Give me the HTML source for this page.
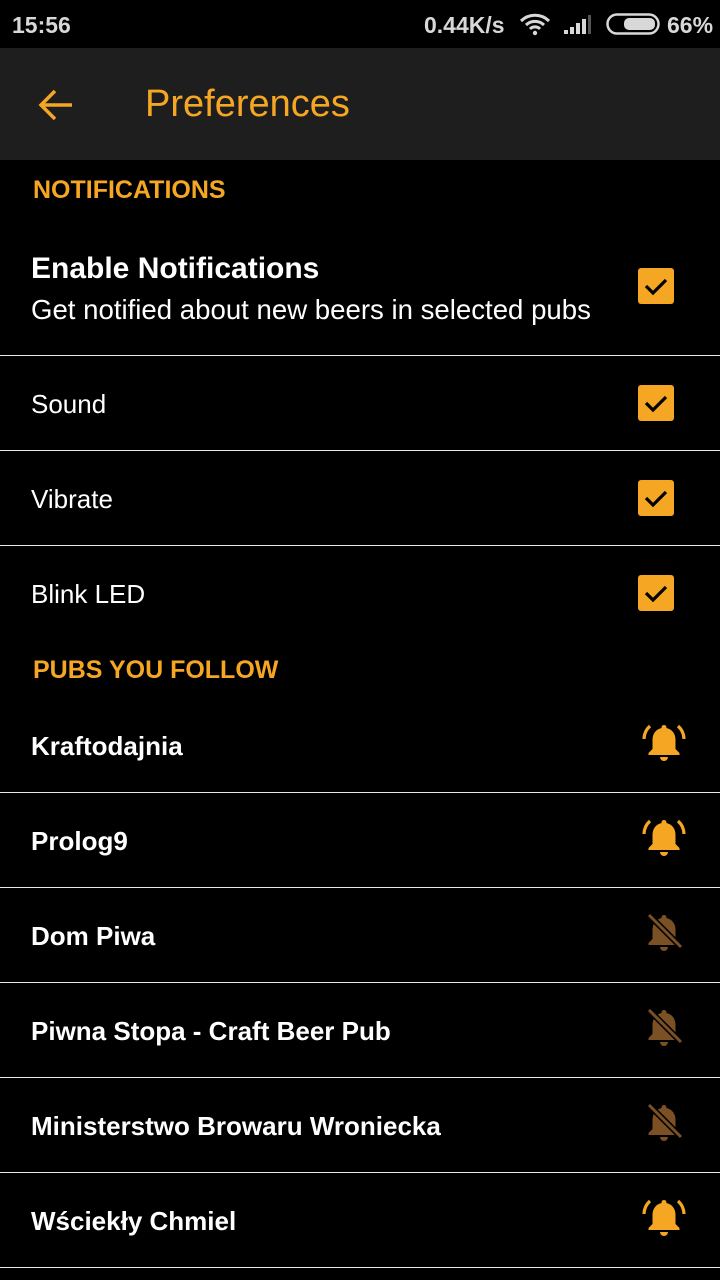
<!DOCTYPE html>
<html><head><meta charset="utf-8"><style>
*{margin:0;padding:0;box-sizing:border-box}
body{width:720px;height:1280px;background:#000;font-family:"Liberation Sans",sans-serif;position:relative;overflow:hidden;color:#fff}
.abs{position:absolute}
.sb{top:0;left:0;width:720px;height:48px;background:#000;color:#d8d8d8;font-weight:bold;font-size:23px}
.tb{top:48px;left:0;width:720px;height:112px;background:#1e1e1e}
.hdr{color:#f5a623;font-weight:bold;font-size:25px;left:33px}
.line{left:0;width:720px;height:1px;background:#e8e8e8}
.t{left:31px;font-size:26px}
.b{font-weight:bold;font-size:26px;left:31px}
.cb{left:638px;width:36px;height:36px;background:#f5a623;border-radius:3px}
.bell{left:640px;width:48px;height:48px}
</style></head><body>
<div class="abs sb"><span class="abs" style="left:12px;top:12px">15:56</span>
<span class="abs" style="left:424px;top:12px">0.44K/s</span>
<svg class="abs" style="left:518px;top:12px" width="34" height="24" viewBox="0 0 34 24"><path d="M3 9a20 20 0 0 1 28 0M8 13a13 13 0 0 1 18 0M12 17a7 7 0 0 1 10 0" stroke="#d8d8d8" stroke-width="3" fill="none"/><circle cx="17" cy="21" r="2.2" fill="#d8d8d8"/></svg>
<svg class="abs" style="left:563px;top:14px" width="30" height="22" viewBox="0 0 30 22"><rect x="1" y="16" width="4" height="4" fill="#d8d8d8"/><rect x="7" y="13" width="4" height="7" fill="#d8d8d8"/><rect x="13" y="9" width="4" height="11" fill="#d8d8d8"/><rect x="19" y="5" width="4" height="15" fill="#d8d8d8"/><rect x="25" y="1" width="3" height="19" fill="#555"/></svg>
<svg class="abs" style="left:606px;top:13px" width="54" height="22" viewBox="0 0 54 22"><rect x="1.5" y="1.5" width="51" height="19" rx="9.5" stroke="#d8d8d8" stroke-width="2.5" fill="none"/><rect x="18" y="5" width="31" height="12" rx="5" fill="#d8d8d8"/></svg>
<span class="abs" style="left:667px;top:12px">66%</span></div>
<div class="abs tb">
<svg class="abs" style="left:38px;top:40px" width="36" height="34" viewBox="0 0 36 34"><path d="M34 17H4M17 3L3 17l14 14" stroke="#f5a623" stroke-width="3.5" fill="none"/></svg>
<span class="abs" style="left:145px;top:35px;color:#f5a623;font-size:38px">Preferences</span></div>
<div class="abs hdr" style="top:176px">NOTIFICATIONS</div>
<div class="abs b" style="top:252px;font-size:30px">Enable Notifications</div>
<div class="abs t" style="top:294px;font-size:27.6px">Get notified about new beers in selected pubs</div>
<div class="abs cb" style="top:268px"></div>
<div class="abs line" style="top:355px"></div>
<div class="abs t" style="top:389px">Sound</div><div class="abs cb" style="top:385px"></div>
<div class="abs line" style="top:450px"></div>
<div class="abs t" style="top:484px">Vibrate</div><div class="abs cb" style="top:480px"></div>
<div class="abs line" style="top:545px"></div>
<div class="abs t" style="top:579px">Blink LED</div><div class="abs cb" style="top:575px"></div>
<div class="abs hdr" style="top:656px">PUBS YOU FOLLOW</div>
<div class="abs b" style="top:731px">Kraftodajnia</div>
<div class="abs line" style="top:792px"></div>
<div class="abs b" style="top:826px">Prolog9</div>
<div class="abs line" style="top:887px"></div>
<div class="abs b" style="top:921px">Dom Piwa</div>
<div class="abs line" style="top:982px"></div>
<div class="abs b" style="top:1016px">Piwna Stopa - Craft Beer Pub</div>
<div class="abs line" style="top:1077px"></div>
<div class="abs b" style="top:1111px">Ministerstwo Browaru Wroniecka</div>
<div class="abs line" style="top:1172px"></div>
<div class="abs b" style="top:1206px">Wściekły Chmiel</div>
<div class="abs line" style="top:1267px"></div>
<svg width="0" height="0" style="position:absolute"><defs>
<symbol id="ck" viewBox="0 0 36 36"><path d="M8 18l7 7 13-13" stroke="#000" stroke-width="3.2" fill="none"/></symbol>
<symbol id="on" viewBox="0 0 48 48"><path d="M24 5c-2 0-2.5 1.5-2.5 3c-6 1.5-9 6-9 12v9l-4 4v2h31v-2l-4-4v-9c0-6-3-10.5-9-12c0-1.5-.5-3-2.5-3z" fill="#f5a623"/><path d="M20 37h8a4 4 0 0 1-8 0z" fill="#f5a623"/><path d="M10 6a18 18 0 0 0-6 13M38 6a18 18 0 0 1 6 13" stroke="#f5a623" stroke-width="3.2" fill="none"/></symbol>
<symbol id="off" viewBox="0 0 48 48"><path d="M24 5c-2 0-2.5 1.5-2.5 3c-6 1.5-9 6-9 12v9l-4 4v2h31v-2l-4-4v-9c0-6-3-10.5-9-12c0-1.5-.5-3-2.5-3z" fill="#7a5024"/><path d="M20 37h8a4 4 0 0 1-8 0z" fill="#7a5024"/><path d="M9 5l32 32" stroke="#000" stroke-width="6"/><path d="M9 5l32 32" stroke="#7a5024" stroke-width="3"/></symbol>
</defs></svg>
<svg class="abs" style="left:638px;top:268px" width="36" height="36"><use href="#ck"/></svg>
<svg class="abs" style="left:638px;top:385px" width="36" height="36"><use href="#ck"/></svg>
<svg class="abs" style="left:638px;top:480px" width="36" height="36"><use href="#ck"/></svg>
<svg class="abs" style="left:638px;top:575px" width="36" height="36"><use href="#ck"/></svg>
<svg class="abs bell" style="top:720px"><use href="#on"/></svg>
<svg class="abs bell" style="top:815px"><use href="#on"/></svg>
<svg class="abs bell" style="top:910px"><use href="#off"/></svg>
<svg class="abs bell" style="top:1005px"><use href="#off"/></svg>
<svg class="abs bell" style="top:1100px"><use href="#off"/></svg>
<svg class="abs bell" style="top:1195px"><use href="#on"/></svg>
</body></html>
